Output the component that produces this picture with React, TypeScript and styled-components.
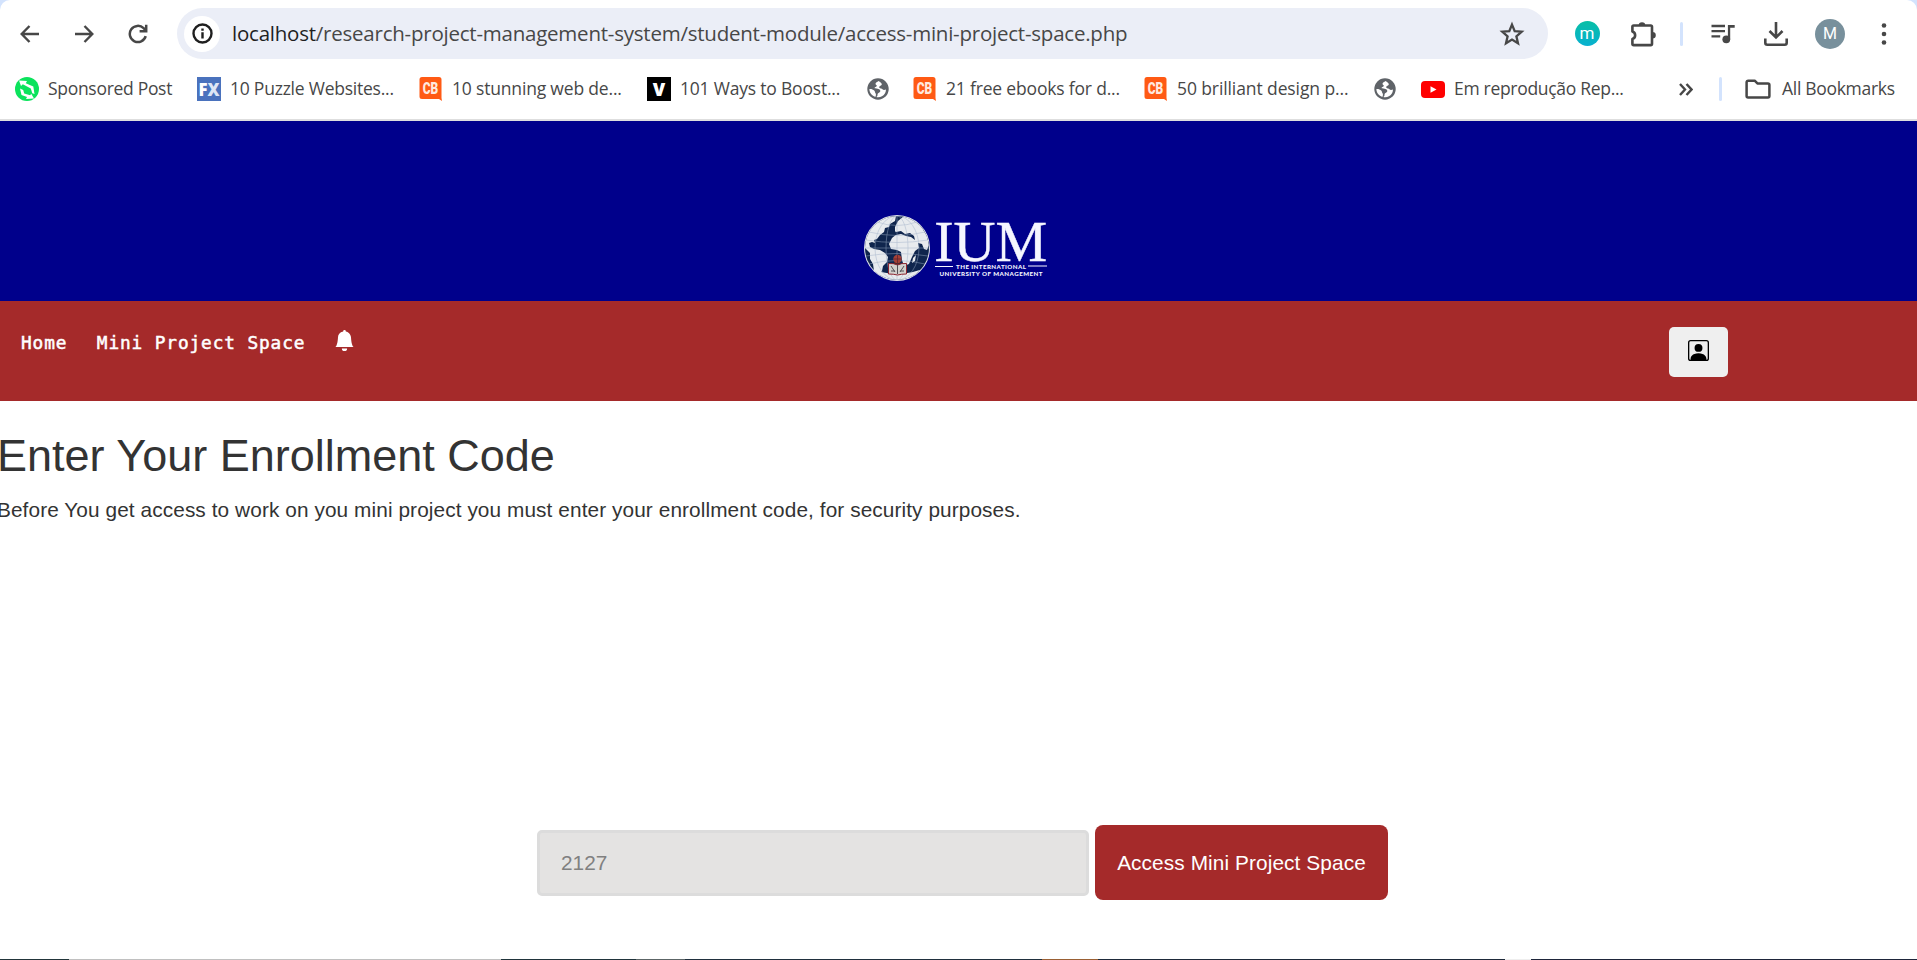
import React from "react";
import styled, { createGlobalStyle } from "styled-components";
import { BsBellFill, BsPersonSquare } from "react-icons/bs";

const GlobalStyle = createGlobalStyle`
  *, *::before, *::after { box-sizing: border-box; }
  body { margin: 0; background: #fff; overflow: hidden; }
`;

const Screen = styled.div`
  width: 1917px;
  height: 960px;
  display: flex;
  flex-direction: column;
  background: #fff;
  font-family: "Liberation Sans", Arial, sans-serif;
  color: #333;
  overflow: hidden;
`;

const Chrome = styled.header`
  height: 121px;
  flex: none;
  background: #d3e3fd;
  font-family: "Open Sans", "Noto Sans", sans-serif;
  color: #474747;
`;

const ChromeSurface = styled.div`
  height: 121px;
  background: #fff;
  border-bottom: 2px solid #dedede;
  border-radius: 10px 10px 0 0;
`;

const Toolbar = styled.div`
  height: 67px;
  display: flex;
  align-items: center;
`;

const Slot = styled.span<{ $left?: number; $w: number }>`
  display: flex;
  align-items: center;
  justify-content: center;
  flex: none;
  width: ${(p) => p.$w}px;
  margin-left: ${(p) => p.$left ?? 0}px;
  svg { display: block; flex: none; }
`;

const AddressBar = styled.div`
  width: 1371px;
  height: 51px;
  margin-left: 25px;
  padding: 0 23px 0 7px;
  display: flex;
  align-items: center;
  border-radius: 26px;
  background: #ebeef7;
`;

const SiteInfo = styled.span`
  width: 36px;
  height: 36px;
  display: grid;
  place-items: center;
  border-radius: 50%;
  background: #fff;
  color: #1f1f1f;
`;

const Url = styled.span`
  flex: 1;
  margin-left: 12px;
  padding-bottom: 2px;
  font-size: 20.5px;
  line-height: 28px;
  letter-spacing: -0.23px;
  white-space: nowrap;
  b { font-weight: 400; color: #1f1f1f; }
`;

const Divider = styled.span<{ $left: number }>`
  width: 3px;
  height: 24px;
  margin-left: ${(p) => p.$left}px;
  border-radius: 2px;
  background: #d3e3fd;
  flex: none;
`;

const Disc = styled.span<{ $size: number; $bg: string; $font: number }>`
  width: ${(p) => p.$size}px;
  height: ${(p) => p.$size}px;
  border-radius: 50%;
  display: grid;
  place-items: center;
  background: ${(p) => p.$bg};
  color: #fff;
  font-family: Roboto, sans-serif;
  font-size: ${(p) => p.$font}px;
  line-height: 1;
`;

const BookmarksBar = styled.nav`
  height: 44px;
  display: flex;
  align-items: center;
`;

const Bookmark = styled.span<{ $left: number; $w: number; $gap?: number }>`
  display: flex;
  align-items: center;
  flex: none;
  width: ${(p) => p.$w}px;
  margin-left: ${(p) => p.$left}px;
  gap: ${(p) => p.$gap ?? 9}px;
  svg { display: block; flex: none; }
`;

const Label = styled.span<{ $ls?: number }>`
  padding-bottom: 2px;
  font-size: 17.5px;
  line-height: 24px;
  letter-spacing: ${(p) => p.$ls ?? -0.3}px;
  white-space: nowrap;
`;

const Banner = styled.div`
  height: 180px;
  flex: none;
  background: #00008b;
  display: flex;
  justify-content: center;
  align-items: flex-end;
  padding: 0 5px 19px 0;
`;

const NavBar = styled.nav`
  height: 100px;
  flex: none;
  background: #a52a2a;
  color: #fff;
  display: flex;
  align-items: flex-start;
  padding: 26px 189px 0 21px;
`;

const NavLink = styled.a`
  margin-right: 29.5px;
  padding-top: 3px;
  font-family: "DejaVu Sans Mono", monospace;
  font-size: 17.8px;
  line-height: 26px;
  letter-spacing: 0.88px;
  -webkit-text-stroke: 0.5px #fff;
  white-space: pre;
`;

const Bell = styled.span`
  margin-top: 3px;
  margin-left: -1px;
  svg { display: block; }
`;

const ProfileButton = styled.button`
  width: 59px;
  height: 50px;
  margin-left: auto;
  padding: 0 0 3px;
  display: grid;
  place-items: center;
  border: 0;
  border-radius: 5px;
  background: #efefef;
  color: #000;
`;

const Main = styled.main`
  flex: 1;
  display: flex;
  flex-direction: column;
`;

const Title = styled.h1`
  margin: 28px 0 0 -3px;
  font-size: 45px;
  line-height: 54px;
  font-weight: 400;
`;

const Hint = styled.p`
  margin: 13px 0 0 -3px;
  font-size: 20.8px;
  line-height: 28px;
  letter-spacing: 0.09px;
`;

const EnrollForm = styled.form`
  margin: 301px 0 0 537px;
  display: flex;
  align-items: center;
  gap: 6px;
`;

const CodeInput = styled.input`
  width: 552px;
  height: 66px;
  padding: 0 21px;
  border: 3px solid #dcdcdc;
  border-radius: 5px;
  background: #e4e3e2;
  font: 20.8px "Liberation Sans", Arial, sans-serif;
  color: #808080;
  outline: 0;
`;

const Submit = styled.button`
  width: 293px;
  height: 75px;
  padding: 0;
  border: 0;
  border-radius: 8px;
  background: #a52a2a;
  color: #fff;
  font: 20.8px "Liberation Sans", Arial, sans-serif;
  letter-spacing: 0.1px;
  white-space: nowrap;
`;

const Taskbar = styled.footer`
  height: 1px;
  flex: none;
  display: flex;
`;

const TaskSegment = styled.span<{ $w: number; $bg: string }>`
  width: ${(p) => p.$w}px;
  height: 1px;
  background: ${(p) => p.$bg};
`;

const BackIcon = () => (
  <svg width="20" height="18" viewBox="0 0 20 18" fill="none" stroke="#474747" strokeWidth="2.4">
    <path d="M9.5 1 1.700 9l7.800 8M2 9h17" />
  </svg>
);

const ForwardIcon = () => (
  <svg width="20" height="18" viewBox="0 0 20 18" fill="none" stroke="#474747" strokeWidth="2.4">
    <path d="m10.500 1 7.800 8-7.800 8M18 9H1" />
  </svg>
);

const ReloadIcon = () => (
  <svg width="20" height="20" viewBox="0 0 20 20" fill="none" stroke="#474747" strokeWidth="2.5">
    <path d="M17.700 12.200A8.100 8.100 0 1 1 15.600 4.200L17.800 6.500" />
    <path d="M18.200 .8V7.300H11.600" />
  </svg>
);

const InfoIcon = () => (
  <svg width="21" height="21" viewBox="0 0 21 21">
    <circle cx="10.5" cy="10.5" r="9" fill="none" stroke="#1f1f1f" strokeWidth="2.4" />
    <path d="M9.300 9.200h2.400v6.300H9.300zM9.300 5.400h2.400v2.300H9.300z" fill="#1f1f1f" />
  </svg>
);

const StarIcon = () => (
  <svg width="26" height="26" viewBox="0 0 26 26" fill="none" stroke="#474747" strokeWidth="2.3">
    <path d="m13 3.600 2.700 6.500 7 .6-5.300 4.600 1.600 6.900-6-3.700-6 3.700 1.600-6.900-5.300-4.600 7-.6z" />
  </svg>
);

const PuzzleIcon = () => (
  <svg width="26" height="26" viewBox="0 0 26 26">
    <path
      d="M2.400 5.800a1.300 1.300 0 0 1 1.300-1.300h17a1.300 1.300 0 0 1 1.300 1.300v17a1.300 1.300 0 0 1-1.300 1.300h-17a1.300 1.300 0 0 1-1.300-1.300v-4.700a4 4 0 0 0 0-7.600z"
      fill="none"
      stroke="#474747"
      strokeWidth="2.6"
      strokeLinejoin="round"
    />
    <path d="M8.700 4.500a3.300 3.300 0 0 1 6.600 0zM22.500 11a3.300 3.300 0 0 1 0 6.600z" fill="#474747" />
  </svg>
);

const MusicIcon = () => (
  <svg width="24" height="20" viewBox="0 0 24 20">
    <path d="M.5 2h13.500M.5 7.200h13.500M.5 12.400h8.700" stroke="#474747" strokeWidth="2.3" />
    <circle cx="15.3" cy="15.3" r="3.9" fill="#474747" />
    <path d="M16.900 .9h6.800v2.900h-4.500v11.500h-2.300z" fill="#474747" />
  </svg>
);

const DotsIcon = () => (
  <svg width="6" height="24" viewBox="0 0 6 24" fill="#474747">
    <circle cx="3" cy="3.5" r="2.3" />
    <circle cx="3" cy="12" r="2.3" />
    <circle cx="3" cy="20.5" r="2.3" />
  </svg>
);

const FolderIcon = () => (
  <svg width="26" height="20" viewBox="0 0 26 20" fill="none" stroke="#474747" strokeWidth="2.5" strokeLinejoin="round">
    <path d="M1.600 3.200a1.500 1.500 0 0 1 1.500-1.500h6.600l2.700 2.700h10.500a1.500 1.500 0 0 1 1.500 1.500v11a1.500 1.500 0 0 1-1.500 1.500H3.100a1.500 1.500 0 0 1-1.500-1.500z" />
  </svg>
);

const GlobeIcon = () => (
  <svg width="22" height="22" viewBox="0 0 22 22">
    <circle cx="11" cy="11" r="10.7" fill="#5f6368" />
    <path d="M11.500 3c-1.200 1-3 1.400-3 2.800 0 1.200 1.500 1.100 1.300 2.300-.2 1-2.200.8-2.200 2 0 1 3.800.2 5.200 1.600 1.200 1.200.2 2.600-.9 3-1.300.5-1.400 1.400-1.400 2.300 0 1.200-.6 1.800-1.300 2 3.500.9 6.700-.6 8.500-3.200.9-1.300 1.300-2.800 1.200-4.200-1.600.8-2.900.5-3.700-.5-1-1.200-3.200-.6-3-2.200.2-1.300 2.300-1 2.600-2.400.2-1-.9-1.800-3.300-3.500z" fill="#fff" />
    <path d="M2.400 11c1.800-.3 3.600.4 4.800 1.600 1 1 .6 1.800 1.200 2.500.7.8.7 2.200.2 3.700-3.600-.8-6.200-4-6.200-7.800z" fill="#fff" />
  </svg>
);

const SponsoredIcon = () => (
  <svg width="24" height="24" viewBox="0 0 24 24">
    <circle cx="12" cy="12" r="12" fill="#0be35c" />
    <path d="M4 3.500 12 4l-1.200 2.200 7.500 3.300 1.200 7.500-2.200-.8-1.500-4.700-8-4.200L6 9z" fill="#fff" />
    <path d="M5 11.500 8.200 13l1 3.500 6 1.800 1-1.500 2.800 4.700-8 .5 1-2-5.500-2z" fill="#fff" />
  </svg>
);

const LetterIcon = ({ text, bg }: { text: string; bg: string }) => (
  <svg width="24" height="24" viewBox="0 0 24 24">
    <rect width="24" height="24" fill={bg} />
    <text x="12" y="18.5" textAnchor="middle" fontFamily="Open Sans, sans-serif" fontWeight="800" fontSize={text.length > 1 ? 17 : 18} fill="#fff" {...(text.length > 1 ? { textLength: 21, lengthAdjust: "spacingAndGlyphs" } : {})}>
      {text.length > 1 ? <>{text[0]}<tspan fill="#dde6f5">{text[1]}</tspan></> : text}
    </text>
  </svg>
);

const CBIcon = () => (
  <svg width="24" height="24" viewBox="0 0 24 24">
    <path d="M3 0h17a2.500 2.500 0 0 1 2.500 2.500V21l.5 3-3-2H3a2.500 2.500 0 0 1-2.500-2.500v-17A2.500 2.500 0 0 1 3 0z" fill="#ff5a14" />
    <text x="3.7" y="17" fontFamily="Roboto, sans-serif" fontWeight="900" fontSize="16.5" fill="#ffe9df" textLength="15.5" lengthAdjust="spacingAndGlyphs">
      CB
    </text>
  </svg>
);

const YoutubeIcon = () => (
  <svg width="24" height="17" viewBox="0 0 24 17">
    <rect width="24" height="17" rx="4" fill="#f00" />
    <path d="m9.500 5.200 6 3.300-6 3.300z" fill="#fff" />
  </svg>
);

const DownloadIcon = () => (
  <svg width="24" height="24" viewBox="0 0 24 24" fill="none" stroke="#474747" strokeWidth="2.6">
    <path d="M12 0v14.500M5.500 9l6.500 6.500L18.500 9M1.300 16.500v4.200a2 2 0 0 0 2 2h17.400a2 2 0 0 0 2-2v-4.200" />
  </svg>
);

const ChevronsIcon = () => (
  <svg width="14" height="13" viewBox="0 0 14 13" fill="none" stroke="#474747" strokeWidth="2.4">
    <path d="m1 1 5 5.500-5 5.500M7.500 1l5 5.500-5 5.500" />
  </svg>
);

const UniversityLogo = () => (
  <svg width="186" height="68" viewBox="864 214 186 68">
    <defs>
      <clipPath id="globe"><circle cx="898" cy="248" r="32" /></clipPath>
    </defs>
    <circle cx="898" cy="248" r="33" fill="#dfe3ea" />
    <circle cx="898" cy="248" r="32" fill="#10264d" />
    <g clipPath="url(#globe)">
      <g fill="#e9ebee">
        <path d="M866 241l2-9 5-7 7-5 8-3 9-1-1 5-5 3-1 3-4 1-1 4-4 3-3 4-3 1 1 3-3-1-3 1 1 4 4 2 6 1 5 3 3 4-1 5-4 4-1 5-3 4-3 1-2-5-1-7-3-5 0-6-5-5z" />
        <path d="M896 227l3-6 6-5 9 3 8 7 6 10 2 9-2 5-3-1-2-5-4-1 1 5-4 3-3 6-3 7-5 2-2-6-1-8-4-2-6-1-2-5 3-6 5-4-2-3z" />
        <path d="M914 258l3-3-1 6-3 2z" />
        <path d="M868 267q30 14 60 0l-10 15h-38z" />
      </g>
      <path d="M897 232l5-1 4 3 5-1 4 3 1 4-4-3-5-1-5-2-5 1z" fill="#10264d" />
      <g fill="none" stroke="#9fb0c8" strokeWidth=".7" opacity=".65">
        <ellipse cx="898" cy="248" rx="11" ry="32" />
        <ellipse cx="898" cy="248" rx="22" ry="32" />
        <path d="M898 216v64M866 248h64M870 232q28 7 56 0M870 264q28-7 56 0M867 240q31 5 62 0M867 256q31-5 62 0M878 222q20 7 40 0" />
      </g>
    </g>
    <path d="M895 261h6v6h-6z" fill="#48262c" />
    <circle cx="898.5" cy="259" r="4.2" fill="#a54036" />
    <path d="M895 259h7M898.500 255v8" stroke="#5f2530" strokeWidth=".8" />
    <path d="M889.500 263.500q5-.5 9 1.500 4-2 9-1.500v10.500q-5 0-9 1-4-1-9-1z" fill="#d2d0cd" stroke="#8e2631" strokeWidth="1" />
    <path d="M898.500 265v9M892 266l4 6M905 266l-4 6M892 271h4M901 271h4" stroke="#534f55" strokeWidth="1" />
    <g fill="#f5f6ff">
      <text x="935.2" y="260.7" fontFamily="Liberation Serif, serif" fontSize="56.5" textLength="113" lengthAdjust="spacingAndGlyphs" stroke="#f5f6ff" strokeWidth=".4">IUM</text>
      <g fontFamily="Lato, sans-serif" fontWeight="900" fontSize="6.2">
        <text x="957" y="268.6" textLength="70">THE INTERNATIONAL</text>
        <text x="940.5" y="276.4" textLength="103">UNIVERSITY OF MANAGEMENT</text>
      </g>
      <path d="M936 265.900h18v1h-18zM1029 265.500h19v1h-19z" />
    </g>
  </svg>
);

const segments: [number, string][] = [
  [69, "#22353a"],
  [432, "#c0c0c0"],
  [135, "#20343b"],
  [49, "#5c6566"],
  [357, "#20303e"],
  [56, "#9a6034"],
  [407, "#1e2a3a"],
  [26, "#eeeeee"],
  [386, "#1e253a"],
];

export default function App() {
  return (
    <>
      <GlobalStyle />
      <Screen>
        <Chrome>
          <ChromeSurface>
            <Toolbar>
              <Slot $left={16} $w={28}><BackIcon /></Slot>
              <Slot $left={26} $w={28}><ForwardIcon /></Slot>
              <Slot $left={26} $w={28}><ReloadIcon /></Slot>
              <AddressBar>
                <SiteInfo><InfoIcon /></SiteInfo>
                <Url><b>localhost</b>/research-project-management-system/student-module/access-mini-project-space.php</Url>
                <StarIcon />
              </AddressBar>
              <Slot $left={24} $w={30}><Disc $size={25} $bg="linear-gradient(#08bfa5, #08b0d0)" $font={17}>m</Disc></Slot>
              <Slot $left={26} $w={30}><PuzzleIcon /></Slot>
              <Divider $left={22} />
              <Slot $left={25} $w={30}><MusicIcon /></Slot>
              <Slot $left={23} $w={30}><DownloadIcon /></Slot>
              <Slot $left={24} $w={30}><Disc $size={30} $bg="#78909c" $font={16}>M</Disc></Slot>
              <Slot $left={24} $w={30}><DotsIcon /></Slot>
            </Toolbar>
            <BookmarksBar>
              <Bookmark $left={15} $w={157}><SponsoredIcon /><Label>Sponsored Post</Label></Bookmark>
              <Bookmark $left={25} $w={196}><LetterIcon text="FX" bg="#4a72bd" /><Label $ls={-0.23}>10 Puzzle Websites...</Label></Bookmark>
              <Bookmark $left={26} $w={202}><CBIcon /><Label $ls={-0.18}>10 stunning web de...</Label></Bookmark>
              <Bookmark $left={26} $w={194}><LetterIcon text="V" bg="#000" /><Label $ls={-0.2}>101 Ways to Boost...</Label></Bookmark>
              <Bookmark $left={26} $w={24}><GlobeIcon /></Bookmark>
              <Bookmark $left={22} $w={207}><CBIcon /><Label $ls={-0.18}>21 free ebooks for d...</Label></Bookmark>
              <Bookmark $left={24} $w={204}><CBIcon /><Label $ls={-0.1}>50 brilliant design p...</Label></Bookmark>
              <Bookmark $left={26} $w={24}><GlobeIcon /></Bookmark>
              <Bookmark $left={23} $w={203}><YoutubeIcon /><Label>Em reprodução Rep...</Label></Bookmark>
              <Slot $left={55} $w={14}><ChevronsIcon /></Slot>
              <Divider $left={26} />
              <Bookmark $left={23} $w={153} $gap={11}><FolderIcon /><Label>All Bookmarks</Label></Bookmark>
            </BookmarksBar>
          </ChromeSurface>
        </Chrome>
        <Banner><UniversityLogo /></Banner>
        <NavBar>
          <NavLink>Home</NavLink>
          <NavLink>Mini Project Space</NavLink>
          <Bell><BsBellFill size={21} /></Bell>
          <ProfileButton type="button"><BsPersonSquare size={21} /></ProfileButton>
        </NavBar>
        <Main>
          <Title>Enter Your Enrollment Code</Title>
          <Hint>Before You get access to work on you mini project you must enter your enrollment code, for security purposes.</Hint>
          <EnrollForm>
            <CodeInput defaultValue="2127" />
            <Submit type="button">Access Mini Project Space</Submit>
          </EnrollForm>
        </Main>
        <Taskbar>
          {segments.map(([w, bg], i) => <TaskSegment key={i} $w={w} $bg={bg} />)}
        </Taskbar>
      </Screen>
    </>
  );
}
